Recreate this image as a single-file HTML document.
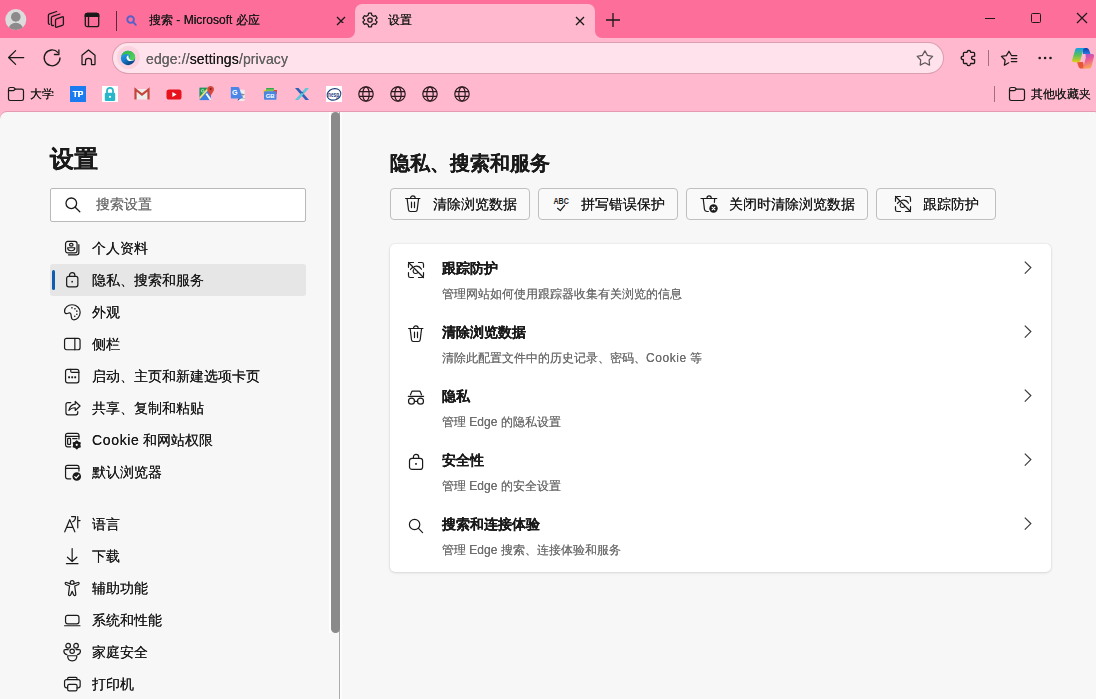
<!DOCTYPE html>
<html><head><meta charset="utf-8">
<style>
*{margin:0;padding:0;box-sizing:border-box}
html,body{width:1096px;height:699px;overflow:hidden;background:#ffb8cd;font-family:"Liberation Sans",sans-serif;color:#1a1a1a}
svg{position:absolute;overflow:visible}
.t{position:absolute;white-space:nowrap;font-size:14px;line-height:20px;will-change:transform;text-shadow:0 0 .4px currentColor}
#tabbar{position:absolute;left:0;top:0;width:1096px;height:38px;background:#fd6e9b}
#toolbar{position:absolute;left:0;top:38px;width:1096px;height:40px;background:#ffb8cd}
#bmbar{position:absolute;left:0;top:78px;width:1096px;height:34px;background:#ffb8cd}
#content{position:absolute;left:0;top:112px;width:1096px;height:587px;background:#f7f7f7;border-top-left-radius:7px;border-top-right-radius:1px;box-shadow:0 -1px 0 rgba(160,60,90,.25)}
</style></head><body>
<div id="tabbar">
  <!-- avatar -->
  <svg width="24" height="24" style="left:5px;top:9px" viewBox="0 0 24 24">
    <defs><clipPath id="avc"><circle cx="10.8" cy="10.6" r="10.5"/></clipPath></defs>
    <circle cx="10.8" cy="10.6" r="10.5" fill="#dcdcdc"/>
    <circle cx="10.8" cy="7.9" r="4.8" fill="#8c8a8a"/>
    <ellipse cx="10.8" cy="20" rx="7" ry="6.2" fill="#8c8a8a" clip-path="url(#avc)"/>
  </svg>
  <!-- workspaces -->
  <svg width="24" height="24" style="left:44px;top:8px" viewBox="0 0 24 24" fill="none" stroke="#1a1a1a" stroke-width="1.3" stroke-linejoin="round" stroke-linecap="round">
    <path d="M11.5 12.3 Q11.5 11.2 12.6 10.8 L18.2 8.8 Q19.4 8.4 19.4 9.6 V16 Q19.4 17 18.4 17.3 L12.8 19.2 Q11.5 19.6 11.5 18.4 Z"/>
    <path d="M15.9 6 L8.6 8.4 Q7.4 8.8 7.4 10 V16.4 Q7.4 17.3 8.5 17.5 H9.5"/>
    <path d="M12.6 3.5 L5.6 5.8 Q4.4 6.2 4.4 7.4 V15 Q4.4 16 5.4 16.3"/>
  </svg>
  <!-- tab actions -->
  <svg width="16" height="16" style="left:84px;top:12px" viewBox="0 0 16 16" fill="none" stroke="#1a1a1a" stroke-width="1.3">
    <rect x="1.3" y="1.3" width="13.4" height="13.4" rx="2"/>
    <path d="M1.3 4.4 V3.3 C1.3 2.2 2.2 1.3 3.3 1.3 H12.7 C13.8 1.3 14.7 2.2 14.7 3.3 V4.4 Z" fill="#1a1a1a"/>
    <path d="M4.5 4.5 V14.5"/>
  </svg>
  <div style="position:absolute;left:116px;top:11px;width:1px;height:20px;background:#5a2a3a"></div>
  <!-- search icon (bing tab) -->
  <svg width="12" height="12" style="left:126px;top:14.5px" viewBox="0 0 12 12" fill="none" stroke="#5560c8" stroke-width="1.9">
    <circle cx="4.6" cy="4.6" r="3.3"/><path d="M7.2 7.2 L9.8 9.8" stroke-linecap="round"/>
  </svg>
  <div class="t" style="left:149px;top:10px;font-size:12px;color:#1a1a1a">搜索 - Microsoft 必应</div>
  <svg width="10" height="10" style="left:335.5px;top:15.5px" viewBox="0 0 10 10" stroke="#1a1a1a" stroke-width="1.3"><path d="M1 1 L9 9 M9 1 L1 9"/></svg>
  <!-- active tab -->
  <div style="position:absolute;left:355px;top:4px;width:240px;height:40px;background:#ffb8cd;border-radius:7px 7px 0 0"></div>
  <div style="position:absolute;left:348px;top:30px;width:7px;height:8px;background:#ffb8cd"></div>
  <div style="position:absolute;left:341px;top:23px;width:14px;height:15px;background:#fd6e9b;border-bottom-right-radius:7px"></div>
  <div style="position:absolute;left:595px;top:30px;width:7px;height:8px;background:#ffb8cd"></div>
  <div style="position:absolute;left:595px;top:23px;width:14px;height:15px;background:#fd6e9b;border-bottom-left-radius:7px"></div>
  <svg width="16" height="16" style="left:362px;top:12px" viewBox="0 0 16 16" fill="none" stroke="#1a1a1a" stroke-width="1.25">
    <path d="M6.6 1.2 H9.4 L9.9 3.3 L11.6 4.3 L13.7 3.7 L15.1 6.1 L13.5 7.6 V8.4 L15.1 9.9 L13.7 12.3 L11.6 11.7 L9.9 12.7 L9.4 14.8 H6.6 L6.1 12.7 L4.4 11.7 L2.3 12.3 L0.9 9.9 L2.5 8.4 V7.6 L0.9 6.1 L2.3 3.7 L4.4 4.3 L6.1 3.3 Z" stroke-linejoin="round"/>
    <circle cx="8" cy="8" r="2.2"/>
  </svg>
  <div class="t" style="left:388px;top:10px;font-size:12px">设置</div>
  <svg width="10" height="10" style="left:574.5px;top:15.5px" viewBox="0 0 10 10" stroke="#1a1a1a" stroke-width="1.3"><path d="M1 1 L9 9 M9 1 L1 9"/></svg>
  <svg width="16" height="16" style="left:604.5px;top:12px" viewBox="0 0 16 16" stroke="#1a1a1a" stroke-width="1.3"><path d="M8 1 V15 M1 8 H15"/></svg>
  <!-- window controls -->
  <div style="position:absolute;left:985px;top:18px;width:10px;height:1.2px;background:#1a1a1a"></div>
  <div style="position:absolute;left:1031px;top:13px;width:10px;height:10px;border:1.2px solid #1a1a1a;border-radius:1.5px"></div>
  <svg width="10" height="10" style="left:1077px;top:13px" viewBox="0 0 10 10" stroke="#1a1a1a" stroke-width="1.2"><path d="M0 0 L10 10 M10 0 L0 10"/></svg>
</div>

<div id="toolbar">
  <svg width="24" height="24" style="left:4px;top:8px" viewBox="0 0 24 24" fill="none" stroke="#1a1a1a" stroke-width="1.25" stroke-linecap="round" stroke-linejoin="round">
    <path d="M11.6 4.6 L4.6 11.5 L11.6 18.4 M4.8 11.5 H19.7"/>
  </svg>
  <svg width="18" height="18" style="left:43px;top:11px" viewBox="0 0 18 18" fill="none" stroke="#1a1a1a" stroke-width="1.3" stroke-linecap="round" stroke-linejoin="round">
    <path d="M17 8.8 A7.9 7.9 0 1 1 15.0 3.6"/>
    <path d="M11.4 5.5 H15.9 V1"/>
  </svg>
  <svg width="16" height="16" style="left:80.5px;top:11px" viewBox="0 0 16 16" fill="none" stroke="#1a1a1a" stroke-width="1.25" stroke-linejoin="round">
    <path d="M1 6.3 L7.5 0.9 L14 6.3 V14.9 Q14 15.5 13.4 15.5 H10.5 V12 Q10.5 9.4 7.5 9.4 Q4.5 9.4 4.5 12 V15.5 H1.6 Q1 15.5 1 14.9 Z"/>
  </svg>
  <!-- address bar -->
  <div style="position:absolute;left:113px;top:4.5px;width:830px;height:30.5px;background:#ffe2eb;border-radius:15px;box-shadow:0 0 0 1px rgba(150,110,120,.35)"></div>
  <div style="position:absolute;left:116.5px;top:8px;width:23px;height:23px;border-radius:50%;background:#fbd3df"></div>
  <svg width="16" height="16" style="left:120px;top:12px" viewBox="0 0 16 16">
    <defs>
      <linearGradient id="eg1" x1="0" y1="0" x2="0.6" y2="1"><stop offset="0" stop-color="#2fb0ee"/><stop offset=".55" stop-color="#1680cf"/><stop offset="1" stop-color="#0a3f80"/></linearGradient>
      <linearGradient id="eg2" x1="0" y1="0" x2="1" y2="1"><stop offset="0" stop-color="#2db44c"/><stop offset="1" stop-color="#58d660"/></linearGradient>
    </defs>
    <circle cx="8" cy="8" r="7.2" fill="url(#eg1)"/>
    <path d="M1 6.6 C1.9 3 4.8 0.8 8.2 0.8 C12.2 0.8 15.2 3.8 15.2 7.3 C15.2 9.5 13.6 10.6 11.8 10.6 C10 10.6 9 9.7 9 8.6 C9 7.6 9.9 7.1 9.9 6.3 C9.9 4.9 8.1 3.9 6.1 3.9 C3.9 3.9 2 5 1 6.6 Z" fill="url(#eg2)"/>
    <path d="M8.4 5.2 C6.9 5.5 6.3 7 6.6 8.4 C7 10 8.6 11.1 10.6 11.1 C12.1 11.1 13.3 10.7 14.3 10.1 C12.9 10.4 11.3 10.3 10.2 9.7 C8.9 9 8.4 7.2 8.4 5.2Z" fill="#fff"/>
  </svg>
  <div class="t" style="left:146px;top:10.5px;font-size:14px;letter-spacing:0.12px;color:#616161">edge://<span style="color:#1a1a1a">settings</span>/privacy</div>
  <svg width="24" height="24" style="left:913px;top:8px" viewBox="0 0 24 24" fill="none" stroke="#5f575a" stroke-width="1.2" stroke-linejoin="round">
    <path d="M11.9 4.8 L14.4 9.4 L19.6 10.3 L16.1 14 L16.6 19.1 L11.9 16.8 L7.2 19.1 L7.7 14 L4.2 10.3 L9.4 9.4 Z"/>
  </svg>
  <svg width="24" height="24" style="left:956px;top:8px" viewBox="0 0 24 24" fill="none" stroke="#1a1a1a" stroke-width="1.3" stroke-linejoin="round">
    <path d="M7.4 7.4 Q7.4 6.4 8.4 6.4 H11 Q11.2 4.5 12.9 4.5 Q14.6 4.5 14.8 6.4 H17.6 Q18.6 6.4 18.6 7.4 V10.2 Q15.5 10.2 15.5 11.9 Q15.5 13.6 18.6 13.6 V16.5 Q18.6 17.5 17.6 17.5 H14.6 Q14.4 19.6 12.7 19.6 Q11 19.6 10.8 17.5 H8.4 Q7.4 17.5 7.4 16.5 V13.6 Q5.2 13.6 5.2 11.9 Q5.2 10.2 7.4 10.2 Z"/>
  </svg>
  <div style="position:absolute;left:988px;top:12px;width:1px;height:16px;background:#a07080"></div>
  <svg width="24" height="24" style="left:997px;top:8px" viewBox="0 0 24 24" fill="none" stroke="#1a1a1a" stroke-width="1.25" stroke-linejoin="round" stroke-linecap="round">
    <path d="M11.7 16.8 L7.4 19.2 L8.1 14.2 L4.4 10.4 L9.4 9.6 L12 5.2 L14.5 9.5 H19.8 M14.3 12.5 H19.8 M14.3 15.5 H19.8"/>
  </svg>
  <svg width="16" height="4" style="left:1038px;top:17.5px" viewBox="0 0 16 4" fill="#1a1a1a"><circle cx="1.7" cy="2" r="1.3"/><circle cx="7.1" cy="2" r="1.3"/><circle cx="12.5" cy="2" r="1.3"/></svg>
  <svg width="32" height="32" style="left:1064px;top:4px" viewBox="0 0 32 32">
    <defs>
      <linearGradient id="cp1" x1="0" y1="0" x2="0" y2="1"><stop offset="0" stop-color="#139fe8"/><stop offset=".5" stop-color="#5bbf5a"/><stop offset="1" stop-color="#e2cc18"/></linearGradient>
      <linearGradient id="cp2" x1="0" y1="0" x2="0.3" y2="1"><stop offset="0" stop-color="#9b52d8"/><stop offset=".5" stop-color="#ec5a98"/><stop offset="1" stop-color="#f7a05a"/></linearGradient>
      <linearGradient id="cp3" x1="0" y1="0" x2="0" y2="1"><stop offset="0" stop-color="#0a3cb0"/><stop offset="1" stop-color="#2a7be0"/></linearGradient>
    </defs>
    <path d="M18 6 H22.5 C24 6 24.8 7 25.3 8.5 L26.5 12 H19 Z" fill="url(#cp3)"/>
    <path d="M13 20 L14.5 24.5 C15 26 16 26.5 17 26.5 H20.5 L19 20 Z" fill="#e8563a"/>
    <path d="M13.2 6 H21.5 C20 6 19.3 7 19 8.2 L16.2 19 C16 19.8 15.5 20.3 14.8 20.3 H10 C8.5 20.3 7.8 19.2 8.2 17.8 L11 8.2 C11.4 6.8 12 6 13.2 6 Z" fill="url(#cp1)"/>
    <path d="M21.5 12 H28.5 C29.8 12 30.3 13 30 14.4 L27.6 24 C27.2 25.5 26.5 26.5 25 26.5 H17 C18.5 26.5 19.2 25.5 19.5 24.3 L21.8 15.8 Z" fill="url(#cp2)"/>
  </svg>
</div>

<div id="bmbar">
  <svg width="24" height="24" style="left:4px;top:4px" viewBox="0 0 24 24" fill="none" stroke="#1a1a1a" stroke-width="1.2" stroke-linejoin="round" stroke-linecap="round">
    <path d="M4.5 16.8 V7.3 C4.5 6.3 5.3 5.5 6.3 5.5 H9.2 C9.8 5.5 10.3 5.8 10.6 6.3 L11.2 7.2 H17.7 C18.7 7.2 19.5 8 19.5 9 V16.8 C19.5 17.8 18.7 18.5 17.7 18.5 H6.3 C5.3 18.5 4.5 17.8 4.5 16.8 Z"/>
    <path d="M4.5 8.6 H9.3 C10 8.6 10.5 8.2 11.2 7.2"/>
  </svg>
  <div class="t" style="left:30px;top:6px;font-size:12px">大学</div>
  <!-- TP -->
  <div style="position:absolute;left:70px;top:8px;width:16px;height:16px;background:#1a7cf0"></div>
  <div class="t" style="left:70px;top:8px;width:16px;height:16px;font-size:8.5px;line-height:16px;font-weight:bold;color:#fff;text-align:center;letter-spacing:-0.3px">TP</div>
  <!-- lock -->
  <div style="position:absolute;left:102px;top:8px;width:16px;height:16px;background:#fff"></div>
  <svg width="16" height="16" style="left:102px;top:8px" viewBox="0 0 16 16">
    <path d="M5 7 V4.8 C5 3 6.3 1.8 8 1.8 C9.7 1.8 11 3 11 4.8 V7" fill="none" stroke="#29b6c9" stroke-width="1.8"/>
    <rect x="2.8" y="6.8" width="10.4" height="8.2" rx="1.2" fill="#29b6c9"/>
    <circle cx="8" cy="10.8" r="1.1" fill="#fff"/>
  </svg>
  <!-- gmail -->
  <svg width="16" height="12" style="left:134px;top:10px" viewBox="0 0 16 12">
    <rect x="1" y="1" width="14" height="10.5" fill="#ececec"/>
    <path d="M1.5 11.5 V1.5 L8 6.5 L14.5 1.5 V11.5" fill="none" stroke="#c5453a" stroke-width="2.2" stroke-linejoin="miter"/>
  </svg>
  <!-- youtube -->
  <svg width="16" height="11" style="left:166px;top:11px" viewBox="0 0 16 11">
    <rect x="0.5" y="0.5" width="15" height="10" rx="2.6" fill="#e8121c"/>
    <path d="M6.4 3 L10.6 5.5 L6.4 8 Z" fill="#fff"/>
  </svg>
  <!-- maps -->
  <svg width="24" height="24" style="left:194px;top:4px" viewBox="0 0 24 24">
    <rect x="5.6" y="5.8" width="11.4" height="12.3" fill="#3b7fe0"/>
    <polygon points="5.6,5.8 13.8,5.8 5.6,15" fill="#1e9a4c"/>
    <polygon points="5.6,15 13.8,5.8 14.8,7.4 5.6,17.4" fill="#f0e070"/>
    <polygon points="11.6,12.3 13,11 17,16.6 17,18.1 15.6,18.1" fill="#f6f6f6"/>
    <path d="M16.6 3.9 C18.5 3.9 20 5.4 20 7.2 C20 9.4 17.5 11.4 16.6 14 C15.7 11.4 13.2 9.4 13.2 7.2 C13.2 5.4 14.7 3.9 16.6 3.9Z" fill="#d6463c"/>
    <circle cx="16.6" cy="7.1" r="1" fill="#7e1d18"/>
    <circle cx="8.6" cy="8.7" r="1.3" fill="none" stroke="#d5f0de" stroke-width=".8"/>
  </svg>
  <!-- translate -->
  <svg width="24" height="24" style="left:226px;top:4px" viewBox="0 0 24 24">
    <rect x="12.4" y="7.7" width="6.3" height="11.2" rx=".8" fill="#eeeeee"/>
    <text x="15.6" y="15.8" font-size="6" font-family="Liberation Sans" fill="#555" text-anchor="middle">文</text>
    <path d="M4.8 4.9 H12 C12.6 4.9 13 5.2 13.2 5.8 L16.6 16.6 H5.8 C5.2 16.6 4.8 16.2 4.8 15.6 Z" fill="#4a85e8"/>
    <path d="M12.4 16.6 L11.6 18.8 L14.6 16.6 Z" fill="#2a3f9e"/>
    <text x="8.8" y="13.3" font-size="7.2" font-family="Liberation Sans" font-weight="bold" fill="#fff" text-anchor="middle">G</text>
  </svg>
  <!-- news GB -->
  <svg width="16" height="16" style="left:262px;top:8px" viewBox="0 0 16 16">
    <rect x="4" y="2" width="8" height="3" rx=".6" fill="#34a853"/>
    <rect x="1.5" y="4" width="4" height="4" fill="#f6c026"/>
    <rect x="11" y="4" width="4" height="4" fill="#e0453a"/>
    <rect x="4" y="3.2" width="8" height="2" fill="#7cc24f"/>
    <rect x="2" y="5.2" width="12.5" height="8.6" rx=".8" fill="#4a86e0"/>
    <text x="8.2" y="11.6" font-size="6" font-family="Liberation Sans" font-weight="bold" fill="#fff" text-anchor="middle">GB</text>
  </svg>
  <!-- X -->
  <svg width="16" height="14" style="left:294px;top:9px" viewBox="0 0 16 14">
    <path d="M1 1 H4.5 L15 13 H11.5 Z" fill="#2f5fb8"/>
    <path d="M15 1 H11.5 L1 13 H4.5 Z" fill="#5ec8d8"/>
    <path d="M6.5 5 L8 6.8 L9.5 5Z" fill="#2f5fb8"/>
  </svg>
  <!-- nesp -->
  <div style="position:absolute;left:326px;top:8px;width:16px;height:16px;background:#fff"></div>
  <svg width="16" height="16" style="left:326px;top:8px" viewBox="0 0 16 16">
    <ellipse cx="8" cy="8.4" rx="7" ry="5.6" fill="none" stroke="#1f3a7a" stroke-width="1.1" transform="rotate(-18 8 8.4)"/>
    <text x="7.6" y="11" font-size="6.4" font-family="Liberation Sans" font-weight="bold" fill="#1f3a7a" text-anchor="middle" textLength="11" lengthAdjust="spacingAndGlyphs">nesp</text>
  </svg>
  <svg width="16" height="16" style="left:358px;top:8px" viewBox="0 0 16 16" fill="none" stroke="#2a1a20" stroke-width="1.2"><circle cx="8" cy="8" r="7.2"/><ellipse cx="8" cy="8" rx="3.2" ry="7.2"/><path d="M1.2 5.6 H14.8 M1.2 10.4 H14.8"/></svg>
  <svg width="16" height="16" style="left:390px;top:8px" viewBox="0 0 16 16" fill="none" stroke="#2a1a20" stroke-width="1.2"><circle cx="8" cy="8" r="7.2"/><ellipse cx="8" cy="8" rx="3.2" ry="7.2"/><path d="M1.2 5.6 H14.8 M1.2 10.4 H14.8"/></svg>
  <svg width="16" height="16" style="left:422px;top:8px" viewBox="0 0 16 16" fill="none" stroke="#2a1a20" stroke-width="1.2"><circle cx="8" cy="8" r="7.2"/><ellipse cx="8" cy="8" rx="3.2" ry="7.2"/><path d="M1.2 5.6 H14.8 M1.2 10.4 H14.8"/></svg>
  <svg width="16" height="16" style="left:454px;top:8px" viewBox="0 0 16 16" fill="none" stroke="#2a1a20" stroke-width="1.2"><circle cx="8" cy="8" r="7.2"/><ellipse cx="8" cy="8" rx="3.2" ry="7.2"/><path d="M1.2 5.6 H14.8 M1.2 10.4 H14.8"/></svg>
  
  <div style="position:absolute;left:994px;top:8px;width:1px;height:16px;background:#a07080"></div>
  <svg width="24" height="24" style="left:1005px;top:4px" viewBox="0 0 24 24" fill="none" stroke="#1a1a1a" stroke-width="1.2" stroke-linejoin="round" stroke-linecap="round">
    <path d="M4.5 16.8 V7.3 C4.5 6.3 5.3 5.5 6.3 5.5 H9.2 C9.8 5.5 10.3 5.8 10.6 6.3 L11.2 7.2 H17.7 C18.7 7.2 19.5 8 19.5 9 V16.8 C19.5 17.8 18.7 18.5 17.7 18.5 H6.3 C5.3 18.5 4.5 17.8 4.5 16.8 Z"/>
    <path d="M4.5 8.6 H9.3 C10 8.6 10.5 8.2 11.2 7.2"/>
  </svg>
  <div class="t" style="left:1031px;top:6px;font-size:12px">其他收藏夹</div>
</div>
<div id="content">
  <div class="t" style="left:50px;top:31px;font-size:24px;line-height:32px;font-weight:bold;text-shadow:0 0 .6px #000">设置</div>
  <div style="position:absolute;left:50px;top:76px;width:256px;height:34px;background:#fff;border:1px solid #b9b9b9;border-radius:2px"></div>
  <svg width="16" height="16" style="left:65px;top:85px" viewBox="0 0 16 16" fill="none" stroke="#1a1a1a" stroke-width="1.3" stroke-linecap="round">
    <circle cx="6.3" cy="6.3" r="5.3"/><path d="M10.2 10.2 L14.8 14.8"/>
  </svg>
  <div class="t" style="left:96px;top:82px;color:#707070">搜索设置</div>
  <div style="position:absolute;left:50px;top:152px;width:256px;height:32px;background:#e6e6e6;border-radius:3px"></div>
  <div style="position:absolute;left:52px;top:158px;width:3px;height:20px;background:#0f5fb0;border-radius:2px"></div>
  <svg width="24" height="24" style="left:60px;top:124px" viewBox="-0.25 -0.25 24 24" fill="none" stroke="#1a1a1a" stroke-width="1.2" stroke-linecap="round" stroke-linejoin="round"><rect x="5.3" y="5.2" width="11.5" height="11.5" rx="2.2"/><ellipse cx="11" cy="8.5" rx="1.8" ry="1.3"/><path d="M7.4 11.5 H14.6 C14.6 13.4 13 14.5 11 14.5 C9 14.5 7.4 13.4 7.4 11.5 Z"/><path d="M18.6 8.4 V16.2 C18.6 17.6 17.6 18.6 16.2 18.6 H8.2"/></svg>
  <div class="t" style="left:92px;top:126px">个人资料</div>
  <svg width="24" height="24" style="left:60px;top:156px" viewBox="-0.25 -0.25 24 24" fill="none" stroke="#1a1a1a" stroke-width="1.2" stroke-linecap="round" stroke-linejoin="round"><path d="M9.3 8.2 V7 C9.3 5.4 10.4 4.3 11.95 4.3 C13.5 4.3 14.6 5.4 14.6 7 V8.2"/><rect x="6.4" y="8.2" width="11.2" height="10.4" rx="2"/><circle cx="11.9" cy="13.4" r="0.85" fill="#1a1a1a" stroke="none"/></svg>
  <div class="t" style="left:92px;top:158px">隐私、搜索和服务</div>
  <svg width="24" height="24" style="left:60px;top:188px" viewBox="-0.25 -0.25 24 24" fill="none" stroke="#1a1a1a" stroke-width="1.2" stroke-linecap="round" stroke-linejoin="round"><path d="M10.3 13.2 C9.7 12.3 8.8 12.3 7.6 13 C6 13.8 4.3 13.2 4.3 11 C4.3 7.3 7.7 4.5 11.8 4.5 C16.4 4.5 19.9 7.9 19.9 12 C19.9 16.4 16.8 19.6 13.7 19.6 C11.6 19.6 11.2 18.4 11 16.3 C10.9 14.8 10.8 13.9 10.3 13.2 Z"/><g fill="#1a1a1a" stroke="none"><circle cx="11.7" cy="7.6" r="0.8"/><circle cx="14.7" cy="8.6" r="0.8"/><circle cx="16.6" cy="10.9" r="0.8"/><circle cx="16.6" cy="14" r="0.8"/><circle cx="14.5" cy="16" r="0.8"/></g></svg>
  <div class="t" style="left:92px;top:190px">外观</div>
  <svg width="24" height="24" style="left:60px;top:220px" viewBox="-0.25 -0.25 24 24" fill="none" stroke="#1a1a1a" stroke-width="1.2" stroke-linecap="round" stroke-linejoin="round"><rect x="4.3" y="6.2" width="15.5" height="11.3" rx="2"/><path d="M14.6 6.2 V17.5"/></svg>
  <div class="t" style="left:92px;top:222px">侧栏</div>
  <svg width="24" height="24" style="left:60px;top:252px" viewBox="-0.25 -0.25 24 24" fill="none" stroke="#1a1a1a" stroke-width="1.2" stroke-linecap="round" stroke-linejoin="round"><rect x="5.3" y="5.2" width="13.3" height="13.4" rx="2"/><path d="M10.5 5.2 V7 C10.5 7.7 11 8.2 11.7 8.2 H18.6"/><g fill="#1a1a1a" stroke="none"><rect x="7.9" y="12" width="1.9" height="1.9" rx=".5"/><rect x="11" y="12" width="1.9" height="1.9" rx=".5"/><rect x="14" y="12" width="1.9" height="1.9" rx=".5"/></g></svg>
  <div class="t" style="left:92px;top:254px">启动、主页和新建选项卡页</div>
  <svg width="24" height="24" style="left:60px;top:284px" viewBox="-0.25 -0.25 24 24" fill="none" stroke="#1a1a1a" stroke-width="1.2" stroke-linecap="round" stroke-linejoin="round"><path d="M10.5 6.3 H7.7 C6.6 6.3 5.7 7.2 5.7 8.3 V16.6 C5.7 17.7 6.6 18.6 7.7 18.6 H15.5 C16.6 18.6 17.5 17.7 17.5 16.6 V15.3"/><path d="M15 5.2 L19.8 9.7 L15 14.2 V11.5 C12 11.5 10.2 12.3 8.6 14.2 C9.4 10.6 11.5 8.2 15 7.9 Z"/></svg>
  <div class="t" style="left:92px;top:286px">共享、复制和粘贴</div>
  <svg width="24" height="24" style="left:60px;top:316px" viewBox="-0.25 -0.25 24 24" fill="none" stroke="#1a1a1a" stroke-width="1.2" stroke-linecap="round" stroke-linejoin="round"><path d="M10.5 18.6 H7.3 C6.2 18.6 5.3 17.7 5.3 16.6 V7.2 C5.3 6.1 6.2 5.2 7.3 5.2 H16.7 C17.8 5.2 18.7 6.1 18.7 7.2 V10.8"/><path d="M5.3 8.2 H18.7"/><rect x="7.4" y="10.1" width="2.9" height="6.1" rx=".6"/><path d="M12.4 10.3 H16.8"/><path d="M16.50 12.70 L17.95 14.09 L19.88 14.65 L19.40 16.60 L19.88 18.55 L17.95 19.11 L16.50 20.50 L15.05 19.11 L13.12 18.55 L13.60 16.60 L13.12 14.65 L15.05 14.09 Z" fill="#1a1a1a" stroke-width="1.4"/><circle cx="16.5" cy="16.6" r="1.1" fill="#fff" stroke="none"/></svg>
  <div class="t" style="left:92px;top:318px"><span style="letter-spacing:.65px">Cookie</span> 和网站权限</div>
  <svg width="24" height="24" style="left:60px;top:348px" viewBox="-0.25 -0.25 24 24" fill="none" stroke="#1a1a1a" stroke-width="1.2" stroke-linecap="round" stroke-linejoin="round"><path d="M10.5 18.6 H7.3 C6.2 18.6 5.3 17.7 5.3 16.6 V7.2 C5.3 6.1 6.2 5.2 7.3 5.2 H16.7 C17.8 5.2 18.7 6.1 18.7 7.2 V10.8"/><path d="M5.3 8.2 H18.7"/><circle cx="16.5" cy="16.3" r="4.3" fill="#1a1a1a" stroke="none"/><path d="M14.5 16.4 L15.9 17.8 L18.5 15" stroke="#fff" stroke-width="1.2"/></svg>
  <div class="t" style="left:92px;top:350px">默认浏览器</div>
  <svg width="24" height="24" style="left:60px;top:400px" viewBox="-0.25 -0.25 24 24" fill="none" stroke="#1a1a1a" stroke-width="1.2" stroke-linecap="round" stroke-linejoin="round"><path d="M4.5 19.6 L9.5 7.4 L14.6 19.6 M6.3 15.1 H12.8"/><path d="M11.3 4.3 H15.3 C15.3 7 14.3 8.9 12.4 9.5"/><path d="M17.5 4.3 V15.6 M17.5 8.3 H19.8"/></svg>
  <div class="t" style="left:92px;top:402px">语言</div>
  <svg width="24" height="24" style="left:60px;top:432px" viewBox="-0.25 -0.25 24 24" fill="none" stroke="#1a1a1a" stroke-width="1.2" stroke-linecap="round" stroke-linejoin="round"><path d="M11.9 4.3 V17 M7.2 13 L11.9 17.3 L16.6 13"/><path d="M6.2 19.4 H17.7"/></svg>
  <div class="t" style="left:92px;top:434px">下载</div>
  <svg width="24" height="24" style="left:60px;top:464px" viewBox="-0.25 -0.25 24 24" fill="none" stroke="#1a1a1a" stroke-width="1.2" stroke-linecap="round" stroke-linejoin="round"><circle cx="11.9" cy="6.3" r="1.9"/><path d="M10.2 7.6 L6.2 6.3 C5.3 6 4.7 6.6 5 7.4 C5.2 8 5.6 8.3 6.1 8.5 L9.3 9.8 L8.3 17.6 C8.1 18.6 8.6 19.3 9.4 19.3 C10 19.3 10.4 18.9 10.6 18.3 L11.9 15 L13.2 18.3 C13.4 18.9 13.8 19.3 14.4 19.3 C15.2 19.3 15.7 18.6 15.5 17.6 L14.5 9.8 L17.7 8.5 C18.2 8.3 18.6 8 18.8 7.4 C19.1 6.6 18.5 6 17.6 6.3 L13.6 7.6"/></svg>
  <div class="t" style="left:92px;top:466px">辅助功能</div>
  <svg width="24" height="24" style="left:60px;top:496px" viewBox="-0.25 -0.25 24 24" fill="none" stroke="#1a1a1a" stroke-width="1.2" stroke-linecap="round" stroke-linejoin="round"><rect x="5.3" y="7.2" width="13.4" height="8.4" rx="2"/><path d="M4.3 17.5 H19.7"/></svg>
  <div class="t" style="left:92px;top:498px">系统和性能</div>
  <svg width="24" height="24" style="left:60px;top:528px" viewBox="-0.25 -0.25 24 24" fill="none" stroke="#1a1a1a" stroke-width="1.2" stroke-linecap="round" stroke-linejoin="round"><circle cx="7.9" cy="5.5" r="2.3"/><circle cx="15.8" cy="5.5" r="2.3"/><circle cx="11.9" cy="11" r="2.2"/><path d="M8 9.3 H5 C4.2 9.3 3.6 9.9 3.6 10.7 C3.6 12.7 4.8 14 6.6 14.4"/><path d="M15.8 9.3 H18.8 C19.6 9.3 20.2 9.9 20.2 10.7 C20.2 12.7 19 14 17.2 14.4"/><path d="M7.4 15.5 H16.6 C16.6 18.6 14.6 20.6 12 20.6 C9.4 20.6 7.4 18.6 7.4 15.5 Z"/></svg>
  <div class="t" style="left:92px;top:530px">家庭安全</div>
  <svg width="24" height="24" style="left:60px;top:560px" viewBox="-0.25 -0.25 24 24" fill="none" stroke="#1a1a1a" stroke-width="1.2" stroke-linecap="round" stroke-linejoin="round"><path d="M7.4 7.3 V6.4 C7.4 5.7 7.9 5.2 8.6 5.2 H15.6 C16.3 5.2 16.8 5.7 16.8 6.4 V7.3"/><path d="M7.4 15.6 H6.3 C5.2 15.6 4.3 14.7 4.3 13.6 V9.3 C4.3 8.2 5.2 7.3 6.3 7.3 H17.9 C19 7.3 19.9 8.2 19.9 9.3 V13.6 C19.9 14.7 19 15.6 17.9 15.6 H16.8"/><rect x="7.4" y="12.2" width="9.4" height="6.4" rx="1.6"/></svg>
  <div class="t" style="left:92px;top:562px">打印机</div>
  <!-- scrollbar -->
    <div style="position:absolute;left:329px;top:0;width:2px;height:521px;background:#fff"></div>
  <div style="position:absolute;left:340px;top:0;width:2px;height:587px;background:#fcfcfc"></div>
  <div style="position:absolute;left:339px;top:0;width:1px;height:587px;background:#acacac"></div>
  <div style="position:absolute;left:331px;top:0px;width:9px;height:521px;background:#8a8a8a;border-radius:4.5px"></div>

  <div class="t" style="left:390px;top:38px;font-size:20px;line-height:26px;font-weight:bold;text-shadow:0 0 .5px #000">隐私、搜索和服务</div>
  <div style="position:absolute;left:390px;top:76px;width:140px;height:32px;border:1px solid #bfbfbf;border-radius:4px;background:#f9f9f9"></div>
  <svg width="24" height="24" style="left:401px;top:80px" viewBox="0 0 24 24" fill="none" stroke="#1a1a1a" stroke-width="1.2" stroke-linecap="round" stroke-linejoin="round"><path d="M4.6 6.5 H18.9"/><path d="M9.5 6.5 C9.5 4.9 10.5 3.9 11.85 3.9 C13.2 3.9 14.2 4.9 14.2 6.5"/><path d="M6.1 6.5 L7.5 17.8 C7.6 18.8 8.3 19.5 9.3 19.5 H14.4 C15.4 19.5 16.1 18.8 16.2 17.8 L17.6 6.5"/><path d="M10.5 10.2 V15.6 M13.5 10.2 V15.6"/></svg>
  <div class="t" style="left:433px;top:82px">清除浏览数据</div>
  <div style="position:absolute;left:538px;top:76px;width:140px;height:32px;border:1px solid #bfbfbf;border-radius:4px;background:#f9f9f9"></div>
  <svg width="24" height="24" style="left:549px;top:80px" viewBox="0 0 24 24" fill="none" stroke="#1a1a1a" stroke-width="1.2" stroke-linecap="round" stroke-linejoin="round"><text x="12.1" y="11.9" font-size="8.2" font-weight="bold" font-family="Liberation Sans" text-anchor="middle" fill="#1a1a1a" stroke="none" textLength="15.4" lengthAdjust="spacingAndGlyphs">ABC</text><path d="M8.6 16.3 L11.3 18.6 L15.6 13.3"/></svg>
  <div class="t" style="left:581px;top:82px">拼写错误保护</div>
  <div style="position:absolute;left:686px;top:76px;width:182px;height:32px;border:1px solid #bfbfbf;border-radius:4px;background:#f9f9f9"></div>
  <svg width="24" height="24" style="left:697px;top:80px" viewBox="0 0 24 24" fill="none" stroke="#1a1a1a" stroke-width="1.2" stroke-linecap="round" stroke-linejoin="round"><path d="M4 6.5 H19.8"/><path d="M9.9 6.5 C9.9 4.8 10.9 3.8 12.1 3.8 C13.3 3.8 14.3 4.8 14.3 6.5"/><path d="M6.2 6.5 L7.4 17 C7.6 18.6 8.8 19.5 10.3 19.5 H11.3"/><path d="M17.7 6.5 L17.4 10.3"/><circle cx="16.5" cy="16.5" r="4.2" fill="#1a1a1a" stroke="none"/><path d="M15.1 15.1 L17.9 17.9 M17.9 15.1 L15.1 17.9" stroke="#fff" stroke-width="1.2"/></svg>
  <div class="t" style="left:729px;top:82px">关闭时清除浏览数据</div>
  <div style="position:absolute;left:876px;top:76px;width:120px;height:32px;border:1px solid #bfbfbf;border-radius:4px;background:#f9f9f9"></div>
  <svg width="24" height="24" style="left:891px;top:80px" viewBox="0 0 24 24" fill="none" stroke="#1a1a1a" stroke-width="1.2" stroke-linecap="round" stroke-linejoin="round"><path d="M4.5 9.3 V6.3 C4.5 5.2 5.2 4.5 6.3 4.5 H9.5 M14.5 4.5 H17.7 C18.8 4.5 19.5 5.2 19.5 6.3 V9.3 M19.5 14.5 V17.7 C19.5 18.8 18.8 19.5 17.7 19.5 H14.5 M9.5 19.5 H6.3 C5.2 19.5 4.5 18.8 4.5 17.7 V14.5"/><path d="M4.5 4.5 L19.5 19.5"/><path d="M10.3 8.5 C13 7.7 16 8.8 17.5 11.2"/><path d="M6.4 11.5 C7 10.7 7.8 10 8.6 9.4"/><path d="M9.6 11.8 C9 12.6 9 13.8 9.6 14.6 C10.4 15.6 12.4 16 13.8 14.6"/></svg>
  <div class="t" style="left:923px;top:82px">跟踪防护</div>
  <div style="position:absolute;left:390px;top:132px;width:661px;height:328px;background:#fff;border-radius:5px;box-shadow:0 0 2px rgba(0,0,0,.12),0 1px 3px rgba(0,0,0,.1)"></div>
  <svg width="24" height="24" style="left:404px;top:146px" viewBox="0 0 24 24" fill="none" stroke="#1a1a1a" stroke-width="1.2" stroke-linecap="round" stroke-linejoin="round"><path d="M4.5 9.3 V6.3 C4.5 5.2 5.2 4.5 6.3 4.5 H9.5 M14.5 4.5 H17.7 C18.8 4.5 19.5 5.2 19.5 6.3 V9.3 M19.5 14.5 V17.7 C19.5 18.8 18.8 19.5 17.7 19.5 H14.5 M9.5 19.5 H6.3 C5.2 19.5 4.5 18.8 4.5 17.7 V14.5"/><path d="M4.5 4.5 L19.5 19.5"/><path d="M10.3 8.5 C13 7.7 16 8.8 17.5 11.2"/><path d="M6.4 11.5 C7 10.7 7.8 10 8.6 9.4"/><path d="M9.6 11.8 C9 12.6 9 13.8 9.6 14.6 C10.4 15.6 12.4 16 13.8 14.6"/></svg>
  <div class="t" style="left:442px;top:146px;font-weight:bold;text-shadow:0 0 .35px #000">跟踪防护</div>
  <div class="t" style="left:442px;top:172px;font-size:12px;line-height:20px;color:#6e6e6e">管理网站如何使用跟踪器收集有关浏览的信息</div>
  <svg width="8" height="14" style="left:1024px;top:148.5px" viewBox="0 0 8 14" fill="none" stroke="#3a3a3a" stroke-width="1.2"><path d="M0.8 0.6 L6.8 6.6 L0.8 12.6"/></svg>
  <svg width="24" height="24" style="left:404px;top:210px" viewBox="0 0 24 24" fill="none" stroke="#1a1a1a" stroke-width="1.2" stroke-linecap="round" stroke-linejoin="round"><path d="M4.6 6.5 H18.9"/><path d="M9.5 6.5 C9.5 4.9 10.5 3.9 11.85 3.9 C13.2 3.9 14.2 4.9 14.2 6.5"/><path d="M6.1 6.5 L7.5 17.8 C7.6 18.8 8.3 19.5 9.3 19.5 H14.4 C15.4 19.5 16.1 18.8 16.2 17.8 L17.6 6.5"/><path d="M10.5 10.2 V15.6 M13.5 10.2 V15.6"/></svg>
  <div class="t" style="left:442px;top:210px;font-weight:bold;text-shadow:0 0 .35px #000">清除浏览数据</div>
  <div class="t" style="left:442px;top:236px;font-size:12px;line-height:20px;color:#6e6e6e">清除此配置文件中的历史记录、密码、<span style="letter-spacing:.55px">Cookie</span> 等</div>
  <svg width="8" height="14" style="left:1024px;top:212.5px" viewBox="0 0 8 14" fill="none" stroke="#3a3a3a" stroke-width="1.2"><path d="M0.8 0.6 L6.8 6.6 L0.8 12.6"/></svg>
  <svg width="24" height="24" style="left:404px;top:274px" viewBox="0 0 24 24" fill="none" stroke="#1a1a1a" stroke-width="1.2" stroke-linecap="round" stroke-linejoin="round"><path d="M6.5 8.8 L7.5 6.2 C7.7 5.6 8.2 5.2 8.8 5.2 H15.2 C15.8 5.2 16.3 5.6 16.5 6.2 L17.5 8.8"/><path d="M4.3 10.3 H19.6"/><circle cx="7.5" cy="15.2" r="3"/><circle cx="16.5" cy="15.2" r="3"/><path d="M10.5 15.4 H13.5"/></svg>
  <div class="t" style="left:442px;top:274px;font-weight:bold;text-shadow:0 0 .35px #000">隐私</div>
  <div class="t" style="left:442px;top:300px;font-size:12px;line-height:20px;color:#6e6e6e">管理 Edge 的隐私设置</div>
  <svg width="8" height="14" style="left:1024px;top:276.5px" viewBox="0 0 8 14" fill="none" stroke="#3a3a3a" stroke-width="1.2"><path d="M0.8 0.6 L6.8 6.6 L0.8 12.6"/></svg>
  <svg width="24" height="24" style="left:404px;top:338px" viewBox="0 0 24 24" fill="none" stroke="#1a1a1a" stroke-width="1.2" stroke-linecap="round" stroke-linejoin="round"><path d="M9.4 8.3 V7 C9.4 5.4 10.5 4.3 12.05 4.3 C13.6 4.3 14.7 5.4 14.7 7 V8.3"/><rect x="5.5" y="8.3" width="13.1" height="11.1" rx="2.5"/><rect x="11.1" y="13" width="1.8" height="1.8" rx=".5" fill="#1a1a1a" stroke="none"/></svg>
  <div class="t" style="left:442px;top:338px;font-weight:bold;text-shadow:0 0 .35px #000">安全性</div>
  <div class="t" style="left:442px;top:364px;font-size:12px;line-height:20px;color:#6e6e6e">管理 Edge 的安全设置</div>
  <svg width="8" height="14" style="left:1024px;top:340.5px" viewBox="0 0 8 14" fill="none" stroke="#3a3a3a" stroke-width="1.2"><path d="M0.8 0.6 L6.8 6.6 L0.8 12.6"/></svg>
  <svg width="24" height="24" style="left:404px;top:402px" viewBox="0 0 24 24" fill="none" stroke="#1a1a1a" stroke-width="1.2" stroke-linecap="round" stroke-linejoin="round"><circle cx="10.6" cy="10.5" r="5.2"/><path d="M14.5 14.4 L18.6 18.6"/></svg>
  <div class="t" style="left:442px;top:402px;font-weight:bold;text-shadow:0 0 .35px #000">搜索和连接体验</div>
  <div class="t" style="left:442px;top:428px;font-size:12px;line-height:20px;color:#6e6e6e">管理 Edge 搜索、连接体验和服务</div>
  <svg width="8" height="14" style="left:1024px;top:404.5px" viewBox="0 0 8 14" fill="none" stroke="#3a3a3a" stroke-width="1.2"><path d="M0.8 0.6 L6.8 6.6 L0.8 12.6"/></svg>
  
</div>
</body></html>
